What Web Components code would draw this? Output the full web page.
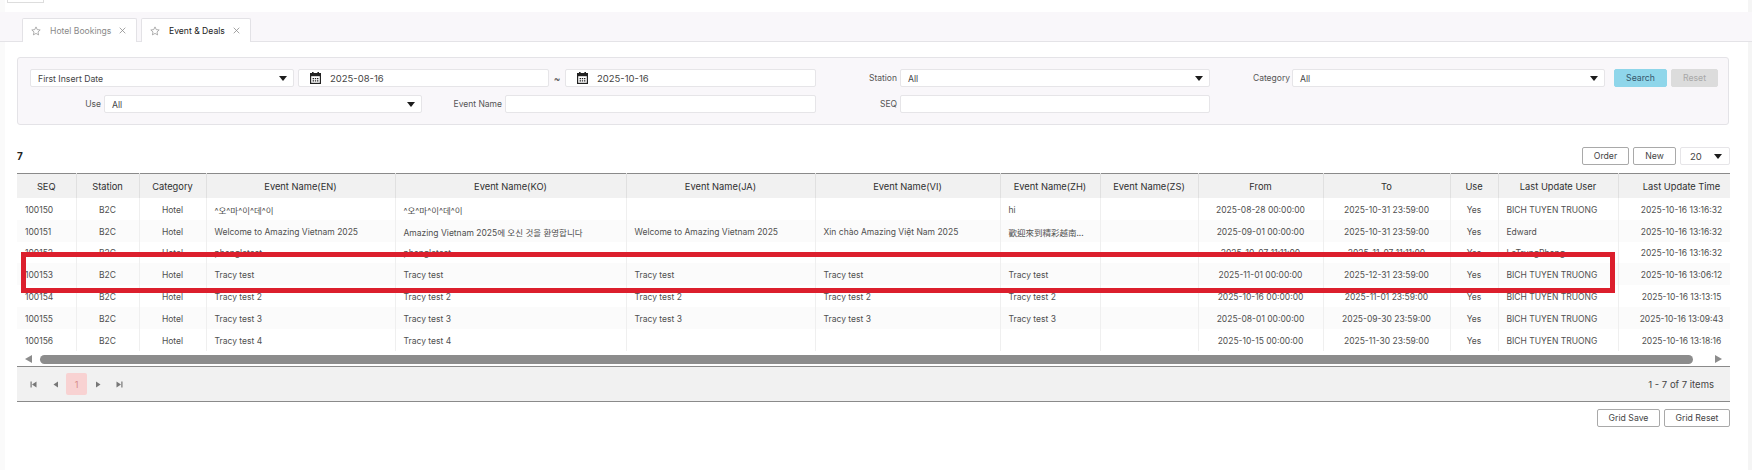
<!DOCTYPE html>
<html lang="en">
<head>
<meta charset="utf-8">
<title>Event &amp; Deals</title>
<style>
  html, body { margin: 0; padding: 0; background: #fff; }
  body { font-family: Inter, "Noto Sans CJK KR", sans-serif; font-size: 8.5px; color: #444; }
</style>
</head>
<body>
<app-page></app-page>

<script>
class TabItem extends HTMLElement {
  constructor() {
    super();
    const shadow = this.attachShadow({ mode: 'open' });
    shadow.innerHTML = `
      <style>
        :host { display: flex; align-items: center; box-sizing: border-box; height: 24px; margin-bottom: -1px;
          background: #fff; border: 1px solid #e3e2e6; border-bottom: 0; border-radius: 2px 2px 0 0;
          color: #8a8a8a; font-size: 8.6px; }
        :host([active]) { color: #222; }
        .star { width: 10px; height: 10px; margin: 0 9px 0 8px; flex: none; }
        .close { width: 7px; height: 7px; margin: 0 0 0 8px; flex: none; }
      </style>
      <svg class="star" viewBox="0 0 20 20" fill="none" stroke="#8f8f8f" stroke-width="1.4" stroke-linejoin="round">
        <path d="M10 1.8l2.5 5.4 5.9.7-4.4 4 1.2 5.9-5.2-3-5.2 3 1.2-5.9-4.4-4 5.9-.7z"/>
      </svg>
      <slot></slot>
      <svg class="close" viewBox="0 0 10 10" stroke="#8a8a8a" stroke-width="1.1"><path d="M1 1l8 8M9 1l-8 8"/></svg>
    `;
  }
}
customElements.define('tab-item', TabItem);

class TabStrip extends HTMLElement {
  constructor() {
    super();
    const shadow = this.attachShadow({ mode: 'open' });
    shadow.innerHTML = `
      <style>
        :host { display: flex; gap: 4px; box-sizing: border-box; height: 30px; margin-top: 12px; padding: 6px 0 0 22px;
          background: #f9f7fa; border-bottom: 1px solid #e4e3e7; }
      </style>
      <slot></slot>
    `;
  }
}
customElements.define('tab-strip', TabStrip);

// select box with the black arrow
class FilterSelect extends HTMLElement {
  constructor() {
    super();
    const shadow = this.attachShadow({ mode: 'open' });
    shadow.innerHTML = `
      <style>
        :host { display: flex; align-items: center; justify-content: space-between; box-sizing: border-box; height: 18px;
          padding: 0 6px 0 7px; background: #fff; border: 1px solid #e6e5e8; border-radius: 2px; color: #444; font-size: 8.7px; }
        .text { padding-top: 1px; }
        .arrow { width: 0; height: 0; border-left: 4px solid transparent; border-right: 4px solid transparent; border-top: 5px solid #1c1c1c; }
      </style>
      <span class="text"><slot></slot></span><span class="arrow"></span>
    `;
  }
}
customElements.define('filter-select', FilterSelect);

class DateInput extends HTMLElement {
  constructor() {
    super();
    const shadow = this.attachShadow({ mode: 'open' });
    shadow.innerHTML = `
      <style>
        :host { display: flex; align-items: center; box-sizing: border-box; height: 18px; padding-left: 11px;
          background: #fff; border: 1px solid #e6e5e8; border-radius: 2px; color: #444; font-size: 9.5px; }
        svg { width: 11px; height: 12px; margin-right: 9px; flex: none; }
      </style>
      <svg viewBox="0 0 11 12">
        <rect x="2" y="0" width="1.6" height="3" fill="#222"/><rect x="7.4" y="0" width="1.6" height="3" fill="#222"/>
        <rect x="0.6" y="1.6" width="9.8" height="9.8" fill="none" stroke="#222" stroke-width="1.2"/>
        <rect x="0.6" y="1.6" width="9.8" height="2.6" fill="#222"/>
        <path d="M2.6 6h1.4v1.2H2.6zM4.8 6h1.4v1.2H4.8zM7 6h1.4v1.2H7zM2.6 8.2h1.4v1.2H2.6zM4.8 8.2h1.4v1.2H4.8zM7 8.2h1.4v1.2H7z" fill="#222"/>
      </svg>
      <slot></slot>
    `;
  }
}
customElements.define('date-input', DateInput);

class TextInput extends HTMLElement {
  constructor() {
    super();
    const shadow = this.attachShadow({ mode: 'open' });
    shadow.innerHTML = `
      <style>
        :host { display: block; box-sizing: border-box; height: 18px; background: #fff; border: 1px solid #e6e5e8; border-radius: 2px; }
      </style>
    `;
  }
}
customElements.define('text-input', TextInput);

class FieldLabel extends HTMLElement {
  constructor() {
    super();
    const shadow = this.attachShadow({ mode: 'open' });
    shadow.innerHTML = `
      <style>
        :host { display: block; box-sizing: border-box; flex: none; text-align: right; line-height: 19px; color: #555; font-size: 8.5px; }
      </style>
      <slot></slot>
    `;
  }
}
customElements.define('field-label', FieldLabel);

class PlainButton extends HTMLElement {
  constructor() {
    super();
    const shadow = this.attachShadow({ mode: 'open' });
    shadow.innerHTML = `
      <style>
        :host { display: flex; align-items: center; justify-content: center; box-sizing: border-box; flex: none; height: 18px;
          background: #fff; border: 1px solid #a9a9a9; border-radius: 2px; color: #444; font-size: 8.7px; }
        :host([kind="search"]) { background: #8fd6ea; border-color: #8fd6ea; color: #35566a; }
        :host([kind="reset"]) { background: #dcdcdc; border-color: #dcdcdc; color: #a8a8a8; }
      </style>
      <slot></slot>
    `;
  }
}
customElements.define('plain-button', PlainButton);

class FilterPanel extends HTMLElement {
  constructor() {
    super();
    const shadow = this.attachShadow({ mode: 'open' });
    shadow.innerHTML = `
      <style>
        :host { display: block; box-sizing: border-box; height: 68px; margin: 15px 23px 0 17px; padding: 11px 0 0 12px;
          background: #f9f7fa; border: 1px solid #e4e3e7; border-radius: 3px; }
        .row { display: flex; height: 18px; margin-bottom: 8px; }
        .tilde { width: 16px; flex: none; text-align: center; line-height: 18px; color: #444; font-size: 10px; }
      </style>
      <div class="row">
        <filter-select style="width:264px">First Insert Date</filter-select>
        <date-input style="width:251px;margin-left:4px">2025-08-16</date-input>
        <span class="tilde">~</span>
        <date-input style="width:251px">2025-10-16</date-input>
        <field-label style="width:81px">Station</field-label>
        <filter-select style="width:310px;margin-left:3px">All</filter-select>
        <field-label style="width:80px">Category</field-label>
        <filter-select style="width:313px;margin-left:2px">All</filter-select>
        <plain-button kind="search" style="width:53px;margin-left:9px">Search</plain-button>
        <plain-button kind="reset" style="width:47px;margin-left:4px">Reset</plain-button>
      </div>
      <div class="row">
        <field-label style="width:71px">Use</field-label>
        <filter-select style="width:318px;margin-left:3px">All</filter-select>
        <field-label style="width:80px">Event Name</field-label>
        <text-input style="width:311px;margin-left:3px"></text-input>
        <field-label style="width:81px">SEQ</field-label>
        <text-input style="width:310px;margin-left:3px"></text-input>
      </div>
    `;
  }
}
customElements.define('filter-panel', FilterPanel);

class GridToolbar extends HTMLElement {
  constructor() {
    super();
    const shadow = this.attachShadow({ mode: 'open' });
    shadow.innerHTML = `
      <style>
        :host { display: flex; align-items: center; height: 18px; margin: 22px 22px 8px 17px; }
        .count { flex: 1; font-size: 10px; font-weight: 700; color: #222; }
        .size { display: flex; align-items: center; justify-content: space-between; box-sizing: border-box; width: 50px; height: 18px;
          margin-left: 4px; padding: 0 7px 0 9px; border: 1px solid #e6e5e8; border-radius: 2px; color: #444; font-size: 9.5px; }
        .arrow { width: 0; height: 0; border-left: 4px solid transparent; border-right: 4px solid transparent; border-top: 5px solid #1c1c1c; }
      </style>
      <span class="count">7</span>
      <plain-button style="width:47px">Order</plain-button>
      <plain-button style="width:43px;margin-left:4px">New</plain-button>
      <span class="size">20<span class="arrow"></span></span>
    `;
  }
}
customElements.define('grid-toolbar', GridToolbar);

const GRID_COLUMNS = [
  { title: 'SEQ', width: 59, align: 'left' },
  { title: 'Station', width: 63, align: 'center' },
  { title: 'Category', width: 67, align: 'center' },
  { title: 'Event Name(EN)', width: 189, align: 'left' },
  { title: 'Event Name(KO)', width: 231, align: 'left' },
  { title: 'Event Name(JA)', width: 189, align: 'left' },
  { title: 'Event Name(VI)', width: 185, align: 'left' },
  { title: 'Event Name(ZH)', width: 100, align: 'left' },
  { title: 'Event Name(ZS)', width: 98, align: 'left' },
  { title: 'From', width: 125, align: 'center' },
  { title: 'To', width: 127, align: 'center' },
  { title: 'Use', width: 48, align: 'center' },
  { title: 'Last Update User', width: 120, align: 'left' },
  { title: 'Last Update Time', width: 127, align: 'center' },
];

const GRID_ROWS = [
  ['100150', 'B2C', 'Hotel', '^오^마^이^데^이', '^오^마^이^데^이', '', '', 'hi', '', '2025-08-28 00:00:00', '2025-10-31 23:59:00', 'Yes', 'BICH TUYEN TRUONG', '2025-10-16 13:16:32'],
  ['100151', 'B2C', 'Hotel', 'Welcome to Amazing Vietnam 2025', 'Amazing Vietnam 2025에 오신 것을 환영합니다', 'Welcome to Amazing Vietnam 2025', 'Xin chào Amazing Việt Nam 2025', '<span lang="zh-Hant">歡迎來到精彩越南...</span>', '', '2025-09-01 00:00:00', '2025-10-31 23:59:00', 'Yes', 'Edward', '2025-10-16 13:16:32'],
  ['100152', 'B2C', 'Hotel', 'phongletest', 'phongletest', '', '', '', '', '2025-10-07 11:11:00', '2025-11-07 11:11:00', 'Yes', 'LeTrungPhong', '2025-10-16 13:16:32'],
  ['100153', 'B2C', 'Hotel', 'Tracy test', 'Tracy test', 'Tracy test', 'Tracy test', 'Tracy test', '', '2025-11-01 00:00:00', '2025-12-31 23:59:00', 'Yes', 'BICH TUYEN TRUONG', '2025-10-16 13:06:12'],
  ['100154', 'B2C', 'Hotel', 'Tracy test 2', 'Tracy test 2', 'Tracy test 2', 'Tracy test 2', 'Tracy test 2', '', '2025-10-16 00:00:00', '2025-11-01 23:59:00', 'Yes', 'BICH TUYEN TRUONG', '2025-10-16 13:13:15'],
  ['100155', 'B2C', 'Hotel', 'Tracy test 3', 'Tracy test 3', 'Tracy test 3', 'Tracy test 3', 'Tracy test 3', '', '2025-08-01 00:00:00', '2025-09-30 23:59:00', 'Yes', 'BICH TUYEN TRUONG', '2025-10-16 13:09:43'],
  ['100156', 'B2C', 'Hotel', 'Tracy test 4', 'Tracy test 4', '', '', '', '', '2025-10-15 00:00:00', '2025-11-30 23:59:00', 'Yes', 'BICH TUYEN TRUONG', '2025-10-16 13:18:16'],
];

class DataGrid extends HTMLElement {
  constructor() {
    super();
    const shadow = this.attachShadow({ mode: 'open' });
    const cols = GRID_COLUMNS.map(c => `<col style="width:${c.width}px">`).join('');
    const head = GRID_COLUMNS.map(c => `<th>${c.title}</th>`).join('');
    const body = GRID_ROWS.map(row =>
      '<tr>' + row.map((v, i) => `<td class="${GRID_COLUMNS[i].align}">${v}</td>`).join('') + '</tr>'
    ).join('');
    shadow.innerHTML = `
      <style>
        :host { display: block; height: 179px; margin: 0 22px 0 17px; overflow: hidden; }
        table { table-layout: fixed; width: 1728px; border-collapse: collapse; border-top: 1px solid #8a8a8a; }
        th { height: 24px; padding: 0; background: #f1f1f1; border-right: 1px solid #e0e0e0; color: #2f2f2f; font-size: 9.3px; font-weight: 400; }
        td { height: 21.8px; padding: 2px 8px 0; box-sizing: border-box; border-right: 1px solid #efefef; color: #4f4f4f; font-size: 8.5px;
          white-space: nowrap; overflow: hidden; }
        tr:nth-child(even) td { background: #fbfbfb; }
        .center { text-align: center; }
        .left { text-align: left; }
        span[lang] { font-family: "Noto Sans CJK TC", sans-serif; }
      </style>
      <table>
        <colgroup>${cols}</colgroup>
        <thead><tr>${head}</tr></thead>
        <tbody>${body}</tbody>
      </table>
    `;
  }
}
customElements.define('data-grid', DataGrid);

class GridScrollbar extends HTMLElement {
  constructor() {
    super();
    const shadow = this.attachShadow({ mode: 'open' });
    shadow.innerHTML = `
      <style>
        :host { display: flex; align-items: center; height: 14px; margin: 0 22px 0 17px; box-sizing: border-box; padding: 0 8px; }
        .left { width: 0; height: 0; border-top: 4px solid transparent; border-bottom: 4px solid transparent; border-right: 7px solid #8c8c8c; }
        .right { width: 0; height: 0; border-top: 4px solid transparent; border-bottom: 4px solid transparent; border-left: 7px solid #8c8c8c; }
        .thumb { flex: 1; height: 9px; margin: 0 22px 0 8px; background: #8c8c8c; border-radius: 5px; }
      </style>
      <span class="left"></span><span class="thumb"></span><span class="right"></span>
    `;
  }
}
customElements.define('grid-scrollbar', GridScrollbar);

class GridPager extends HTMLElement {
  constructor() {
    super();
    const shadow = this.attachShadow({ mode: 'open' });
    shadow.innerHTML = `
      <style>
        :host { display: flex; align-items: center; box-sizing: border-box; height: 36px; margin: 0 22px 0 17px; padding: 0 16px 0 0;
          background: #f1f1f1; border-top: 1px solid #8a8a8a; border-bottom: 1px solid #8a8a8a; color: #444; font-size: 9.5px; }
        svg { width: 7px; height: 7px; flex: none; }
        .page { display: flex; align-items: center; justify-content: center; width: 21px; height: 22px; margin: 0 8px;
          background: #f8d2d2; border-radius: 2px; color: #d48a8a; font-size: 9px; }
        .info { margin-left: auto; }
      </style>
      <svg style="margin-left:13px" viewBox="0 0 7 7" fill="#777"><path d="M0.5 0.5h1.2v6H0.5zM6.5 0.5v6L2 3.5z"/></svg>
      <svg style="margin-left:15px" viewBox="0 0 7 7" fill="#777"><path d="M6 0.5v6L1.5 3.5z"/></svg>
      <span class="page" style="margin-left:7px">1</span>
      <svg style="margin-left:0" viewBox="0 0 7 7" fill="#777"><path d="M1 0.5v6L5.5 3.5z"/></svg>
      <svg style="margin-left:14px" viewBox="0 0 7 7" fill="#777"><path d="M0.5 0.5v6L5 3.5zM5.3 0.5h1.2v6H5.3z"/></svg>
      <span class="info">1 - 7 of 7 items</span>
    `;
  }
}
customElements.define('grid-pager', GridPager);

class AppPage extends HTMLElement {
  constructor() {
    super();
    const shadow = this.attachShadow({ mode: 'open' });
    shadow.innerHTML = `
      <style>
        :host { display: block; position: relative; width: 1752px; height: 470px; overflow: hidden;
          background: linear-gradient(90deg, #fafafa 5px, #fff 5px, #fff 1748px, #f5f5f5 1748px);
          font-family: Inter, "Noto Sans CJK KR", sans-serif; font-size: 8.5px; color: #444; }
        .stub { position: absolute; left: 7px; top: -1px; width: 37px; height: 4px; box-sizing: border-box; border: 1px solid #ddd; }
        .actions { display: flex; justify-content: flex-end; gap: 4px; margin: 7px 22px 0 0; }
        .mark { position: absolute; left: 21px; top: 252px; width: 1594px; height: 41px; box-sizing: border-box;
          border: 5px solid #dc1f2d; pointer-events: none; }
      </style>
      <span class="stub"></span>
      <tab-strip>
        <tab-item style="width:115px">Hotel Bookings</tab-item>
        <tab-item active style="width:110px">Event &amp; Deals</tab-item>
      </tab-strip>
      <filter-panel></filter-panel>
      <grid-toolbar></grid-toolbar>
      <data-grid></data-grid>
      <grid-scrollbar></grid-scrollbar>
      <grid-pager></grid-pager>
      <div class="actions">
        <plain-button style="width:63px">Grid Save</plain-button>
        <plain-button style="width:66px">Grid Reset</plain-button>
      </div>
      <div class="mark"></div>
    `;
  }
}
customElements.define('app-page', AppPage);
</script>
</body>
</html>
